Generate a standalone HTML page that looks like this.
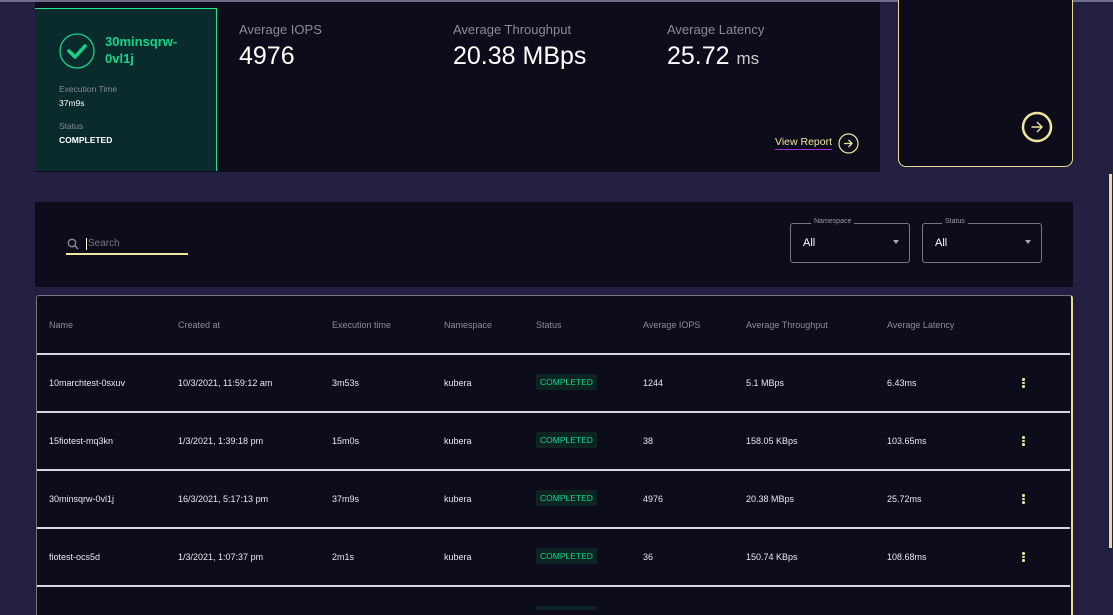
<!DOCTYPE html>
<html><head><style>
*{margin:0;padding:0;box-sizing:border-box}
body{width:1113px;height:610px;overflow:hidden;background:#221f40;font-family:"Liberation Sans",sans-serif;position:relative;color:#fff}
.abs{position:absolute}
.panel{background:#0d0c1a}
.lbl{color:#8b8a99;font-size:13px}
.big{font-size:25px;color:#fff}
th,td{text-align:left}
.hdr{position:absolute;top:320px;font-size:9px;color:#8a8a9a}
.cell{position:absolute;font-size:9px;color:#e8e8ee}
.badge{position:absolute;background:#0d2422;color:#12d68b;font-size:8.5px;padding:3px 4px;border-radius:2px}
.rl{position:absolute;left:37px;width:1033px;height:1.5px;background:#d8d8de}
.dots{position:absolute;width:3px}
.dots i{display:block;width:2.5px;height:2.5px;background:#f0e6a0;border-radius:50%;margin-bottom:1px}
</style></head><body>
<div class="abs" style="left:0;top:0;width:1113px;height:2px;background:#6f6d8c"></div>
<div class="abs panel" style="left:35px;top:2px;width:845px;height:170px"></div>
<div class="abs" style="left:35px;top:8px;width:182px;height:163px;background:#0a2b2b;border:1px solid #1ee596;border-left:none;border-bottom:none"></div>
<svg class="abs" style="left:59px;top:33px" width="36" height="36" viewBox="0 0 36 36"><circle cx="18" cy="18" r="17" fill="none" stroke="#14d48a" stroke-width="1.3"/><path d="M10 18l6 6 10-11" fill="none" stroke="#14d48a" stroke-width="3.5" stroke-linecap="round" stroke-linejoin="round"/></svg>
<div class="abs" style="left:105px;top:33px;font-size:13px;font-weight:bold;color:#14d48a;line-height:17px">30minsqrw-<br>0vl1j</div>
<div class="abs" style="left:59px;top:84px;font-size:8.5px;color:#8b8a99">Execution Time</div>
<div class="abs" style="left:59px;top:98px;font-size:8.5px;color:#fff">37m9s</div>
<div class="abs" style="left:59px;top:121px;font-size:8.5px;color:#8b8a99">Status</div>
<div class="abs" style="left:59px;top:135px;font-size:8.5px;color:#fff;font-weight:bold">COMPLETED</div>
<div class="abs lbl" style="left:239px;top:22px">Average IOPS</div>
<div class="abs big" style="left:239px;top:42px">4976</div>
<div class="abs lbl" style="left:453px;top:22px">Average Throughput</div>
<div class="abs big" style="left:453px;top:42px">20.38 MBps</div>
<div class="abs lbl" style="left:667px;top:22px">Average Latency</div>
<div class="abs big" style="left:667px;top:42px">25.72 <span style="font-size:17px;color:#ccc">ms</span></div>
<div class="abs" style="left:775px;top:136px;font-size:10.5px;color:#f0e6a0;border-bottom:1px solid #9b2fcf;line-height:13px">View Report</div>
<svg class="abs" style="left:838px;top:133px" width="21" height="21" viewBox="0 0 21 21"><circle cx="10.5" cy="10.5" r="9.5" fill="none" stroke="#f0e6a0" stroke-width="1.2"/><path d="M6 10.5h8M10.5 7l3.5 3.5-3.5 3.5" fill="none" stroke="#f0e6a0" stroke-width="1.3"/></svg>
<div class="abs panel" style="left:898px;top:0;width:175px;height:167px;border:1px solid #e8dd95;border-top:none;border-radius:0 0 8px 8px"></div>
<svg class="abs" style="left:1021px;top:111px" width="32" height="32" viewBox="0 0 32 32"><circle cx="16" cy="16" r="14" fill="none" stroke="#f0e6a0" stroke-width="2.5"/><path d="M10.5 16h10M16 11l5 5-5 5" fill="none" stroke="#f0e6a0" stroke-width="1.4"/></svg>
<div class="abs panel" style="left:35px;top:202px;width:1038px;height:85px"></div>
<svg class="abs" style="left:67px;top:238px" width="12" height="12" viewBox="0 0 12 12"><circle cx="5" cy="5" r="3.7" fill="none" stroke="#8a8a95" stroke-width="1.3"/><path d="M7.7 7.7l3.3 3.3" stroke="#8a8a95" stroke-width="1.5"/></svg>
<div class="abs" style="left:86px;top:238px;width:1px;height:12px;background:#fff"></div>
<div class="abs" style="left:88px;top:238px;font-size:10px;color:#77767f">Search</div>
<div class="abs" style="left:66px;top:253px;width:122px;height:1.5px;background:#f0e6a0"></div>
<div class="abs" style="left:790px;top:223px;width:120px;height:40px;border:1px solid #77767f;border-radius:3px"></div>
<div class="abs" style="left:811px;top:218px;font-size:7px;color:#99989f;background:#0d0c1a;padding:0 3px">Namespace</div>
<div class="abs" style="left:803px;top:237px;font-size:11px;color:#fff">All</div>
<div class="abs" style="left:893px;top:240px;border:3px solid transparent;border-top:4px solid #aaa"></div>
<div class="abs" style="left:922px;top:223px;width:120px;height:40px;border:1px solid #77767f;border-radius:3px"></div>
<div class="abs" style="left:942px;top:218px;font-size:7px;color:#99989f;background:#0d0c1a;padding:0 3px">Status</div>
<div class="abs" style="left:935px;top:237px;font-size:11px;color:#fff">All</div>
<div class="abs" style="left:1025px;top:240px;border:3px solid transparent;border-top:4px solid #aaa"></div>
<div class="abs panel" style="left:36px;top:295px;width:1037px;height:320px;border:1px solid #77767f;border-right:2px solid #e8dd95;border-bottom:none;border-radius:3px 3px 0 0"></div>
<div class="hdr" style="left:49px">Name</div><div class="hdr" style="left:178px">Created at</div><div class="hdr" style="left:332px">Execution time</div><div class="hdr" style="left:444px">Namespace</div><div class="hdr" style="left:536px">Status</div><div class="hdr" style="left:643px">Average IOPS</div><div class="hdr" style="left:746px">Average Throughput</div><div class="hdr" style="left:887px">Average Latency</div>
<div class="rl" style="top:353px"></div><div class="rl" style="top:411px"></div><div class="rl" style="top:469px"></div><div class="rl" style="top:527px"></div><div class="rl" style="top:585px"></div>
<div class="cell" style="left:49px;top:378px">10marchtest-0sxuv</div><div class="cell" style="left:178px;top:378px">10/3/2021, 11:59:12 am</div><div class="cell" style="left:332px;top:378px">3m53s</div><div class="cell" style="left:444px;top:378px">kubera</div><div class="badge" style="left:536px;top:374px">COMPLETED</div><div class="cell" style="left:643px;top:378px">1244</div><div class="cell" style="left:746px;top:378px">5.1 MBps</div><div class="cell" style="left:887px;top:378px">6.43ms</div><div class="dots" style="left:1022px;top:378px"><i></i><i></i><i></i></div>
<div class="cell" style="left:49px;top:436px">15fiotest-mq3kn</div><div class="cell" style="left:178px;top:436px">1/3/2021, 1:39:18 pm</div><div class="cell" style="left:332px;top:436px">15m0s</div><div class="cell" style="left:444px;top:436px">kubera</div><div class="badge" style="left:536px;top:432px">COMPLETED</div><div class="cell" style="left:643px;top:436px">38</div><div class="cell" style="left:746px;top:436px">158.05 KBps</div><div class="cell" style="left:887px;top:436px">103.65ms</div><div class="dots" style="left:1022px;top:436px"><i></i><i></i><i></i></div>
<div class="cell" style="left:49px;top:494px">30minsqrw-0vl1j</div><div class="cell" style="left:178px;top:494px">16/3/2021, 5:17:13 pm</div><div class="cell" style="left:332px;top:494px">37m9s</div><div class="cell" style="left:444px;top:494px">kubera</div><div class="badge" style="left:536px;top:490px">COMPLETED</div><div class="cell" style="left:643px;top:494px">4976</div><div class="cell" style="left:746px;top:494px">20.38 MBps</div><div class="cell" style="left:887px;top:494px">25.72ms</div><div class="dots" style="left:1022px;top:494px"><i></i><i></i><i></i></div>
<div class="cell" style="left:49px;top:552px">fiotest-ocs5d</div><div class="cell" style="left:178px;top:552px">1/3/2021, 1:07:37 pm</div><div class="cell" style="left:332px;top:552px">2m1s</div><div class="cell" style="left:444px;top:552px">kubera</div><div class="badge" style="left:536px;top:548px">COMPLETED</div><div class="cell" style="left:643px;top:552px">36</div><div class="cell" style="left:746px;top:552px">150.74 KBps</div><div class="cell" style="left:887px;top:552px">108.68ms</div><div class="dots" style="left:1022px;top:552px"><i></i><i></i><i></i></div>
<div class="abs" style="left:536px;top:606px;width:60px;height:4px;background:#0d2422"></div>
<div class="abs" style="left:1109px;top:174px;width:3px;height:374px;background:#e8dd95"></div>
</body></html>
